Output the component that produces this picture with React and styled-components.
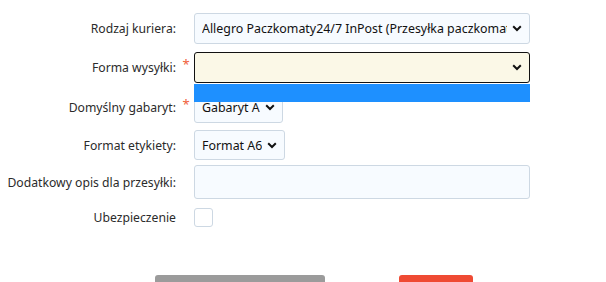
import styled, { createGlobalStyle } from "styled-components";

const GlobalStyle = createGlobalStyle`
  body {
    margin: 0;
    background: #fff;
    font-family: "Noto Sans", "Open Sans", sans-serif;
    font-size: 12.2px;
    color: #222;
  }
`;

function Chevron() {
  return (
    <svg width="10" height="7" viewBox="0 0 10 7">
      <path d="M1.2 1.3 L5 5 L8.8 1.3" fill="none" stroke="#111" strokeWidth="2" />
    </svg>
  );
}

function App() {
  return (
    <>
      <GlobalStyle />
      <Form>
        <Row top={13}>
          <Label>Rodzaj kuriera:</Label>
          <Star />
          <Select wide>
            <SelectText>Allegro Paczkomaty24/7 InPost (Przesyłka paczkomatowa)</SelectText>
            <Chevron />
          </Select>
        </Row>
        <Row top={8}>
          <Label>Forma wysyłki:</Label>
          <Star>*</Star>
          <SelectWrap>
            <Select wide focused>
              <SelectText />
              <Chevron />
            </Select>
            <DropList />
          </SelectWrap>
        </Row>
        <Row top={9}>
          <Label>Domyślny gabaryt:</Label>
          <Star>*</Star>
          <Select>
            <SelectText>Gabaryt A</SelectText>
            <Chevron />
          </Select>
        </Row>
        <Row top={7}>
          <Label>Format etykiety:</Label>
          <Star />
          <Select height={30}>
            <SelectText>Format A6</SelectText>
            <Chevron />
          </Select>
        </Row>
        <Row top={5}>
          <Label>Dodatkowy opis dla przesyłki:</Label>
          <Star />
          <TextArea />
        </Row>
        <Row top={9}>
          <Label>Ubezpieczenie</Label>
          <Star />
          <Checkbox />
        </Row>
        <Buttons>
          <Button color="#9b9b9b" width={170} />
          <Button color="#ef4a33" width={74} />
        </Buttons>
      </Form>
    </>
  );
}

const Form = styled.div`
  width: 606px;
  height: 282px;
  overflow: hidden;
  position: relative;
`;

const Row = styled.div`
  display: grid;
  grid-template-columns: 176px 18px auto;
  align-items: center;
  margin-top: ${(props) => props.top}px;
`;

const Label = styled.div`
  text-align: right;
  color: #2b2b2b;
  white-space: nowrap;
`;

const Star = styled.div`
  color: #f0603c;
  font-size: 13px;
  text-align: center;
  align-self: start;
  padding-top: 3px;
  padding-left: 2px;
`;

const SelectWrap = styled.div`
  position: relative;
`;

const Select = styled.div`
  box-sizing: border-box;
  display: flex;
  align-items: center;
  gap: 5px;
  width: ${(props) => (props.wide ? "336px" : "fit-content")};
  height: ${(props) => props.height || 31}px;
  padding: 0 7px 0 7px;
  border: 1px solid ${(props) => (props.focused ? "#111" : "#cdd8e3")};
  border-radius: 3px;
  background: ${(props) => (props.focused ? "#fbf8e7" : "#f7fbff")};
  overflow: hidden;
`;

const SelectText = styled.div`
  flex: 1;
  white-space: nowrap;
  overflow: hidden;
  color: #111;
  font-size: 12.4px;
`;

const DropList = styled.div`
  position: absolute;
  left: 0;
  top: 32px;
  width: 336px;
  height: 18px;
  background: #1e90ff;
  z-index: 2;
`;

const TextArea = styled.div`
  box-sizing: border-box;
  width: 336px;
  height: 34px;
  border: 1px solid #cdd8e3;
  border-radius: 3px;
  background: #f7fbff;
`;

const Checkbox = styled.div`
  box-sizing: border-box;
  width: 19px;
  height: 19px;
  border: 1px solid #cdd8e3;
  border-radius: 3px;
  background: #fff;
`;

const Buttons = styled.div`
  display: flex;
  gap: 74px;
  margin-top: 48px;
  padding-left: 155px;
`;

const Button = styled.div`
  width: ${(props) => props.width}px;
  height: 32px;
  background: ${(props) => props.color};
  border-radius: 3px;
`;

export default App;
